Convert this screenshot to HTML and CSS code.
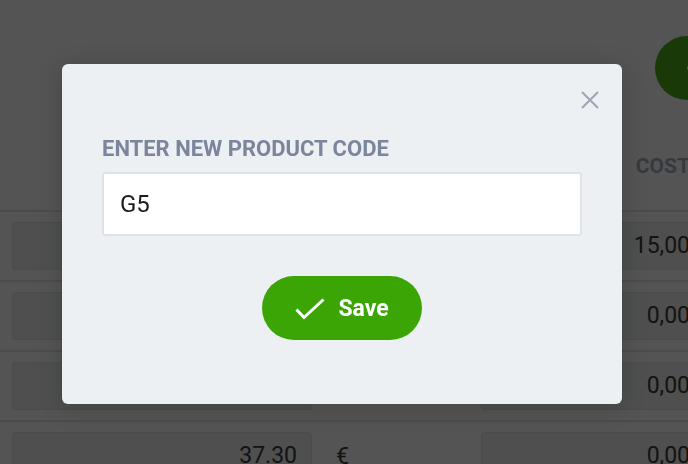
FILE: index.html
```html
<!DOCTYPE html>
<html lang="en">
<head>
<meta charset="utf-8">
<title>Products</title>
<link rel="stylesheet" href="styles.css">
</head>
<body>
<div class="page">
  <div class="topbar">
    <button class="add-btn" type="button">
      <svg class="plus" width="20" height="20" viewBox="0 0 20 20"><path d="M10 1v18M1 10h18" stroke="#fff" stroke-width="3" fill="none"/></svg>
      <span>Add product</span>
    </button>
  </div>
  <div class="table">
    <div class="thead">
      <div class="th"></div>
      <div class="th"></div>
      <div class="th th-num">COST</div>
    </div>
    <div class="tr">
      <div class="td"><div class="box num"></div></div>
      <div class="td cur">€</div>
      <div class="td"><div class="box num">15,00</div></div>
    </div>
    <div class="tr">
      <div class="td"><div class="box num"></div></div>
      <div class="td cur">€</div>
      <div class="td"><div class="box num">0,00</div></div>
    </div>
    <div class="tr">
      <div class="td"><div class="box num"></div></div>
      <div class="td cur">€</div>
      <div class="td"><div class="box num">0,00</div></div>
    </div>
    <div class="tr">
      <div class="td"><div class="box num">37.30</div></div>
      <div class="td cur">€</div>
      <div class="td"><div class="box num">0,00</div></div>
    </div>
  </div>
</div>

<div class="overlay"></div>

<div class="modal">
  <button class="close" type="button" aria-label="Close">
    <svg width="18" height="18" viewBox="0 0 18 18"><path d="M1 1L17 17M17 1L1 17" stroke="#a1a7b8" stroke-width="2.2" fill="none"/></svg>
  </button>
  <label class="label" for="code">ENTER NEW PRODUCT CODE</label>
  <input id="code" class="input" type="text" value="G5">
  <div class="actions">
    <button class="save" type="button">
      <svg width="30" height="22" viewBox="0 0 30 22"><polyline points="1.5,11.5 9,19.5 28.5,1.5" stroke="#fff" stroke-width="3" fill="none"/></svg>
      <span>Save</span>
    </button>
  </div>
</div>
</body>
</html>
```

FILE: styles.css
```css
html, body {
  margin: 0;
  padding: 0;
  overflow: hidden;
  background: #ffffff;
  font-family: Roboto, "Liberation Sans", sans-serif;
}

.page {
  width: 900px;
  height: 464px;
  overflow: hidden;
}

.topbar {
  display: flex;
  padding: 36px 0 0 655px;
}

.add-btn {
  display: flex;
  align-items: center;
  gap: 12px;
  height: 64px;
  padding: 0 32px 0 31px;
  border: none;
  border-radius: 32px;
  background: #3ba505;
  color: #fff;
  font-family: inherit;
  font-size: 22px;
  font-weight: 700;
  white-space: nowrap;
}

.thead,
.tr {
  display: grid;
  grid-template-columns: 300px 169px 224px 1fr;
  padding-left: 12px;
  border-bottom: 2px solid #e0e2e3;
}

.thead {
  padding-top: 54px;
  padding-bottom: 32px;
}

.th {
  font-size: 21px;
  line-height: 24px;
  font-weight: 700;
  color: #9ca5bd;
}

.th-num {
  text-align: right;
  padding-right: 15px;
}

.tr {
  padding-top: 10px;
  padding-bottom: 10px;
}

.td {
  display: flex;
  align-items: center;
}

.box {
  box-sizing: border-box;
  width: 100%;
  height: 48px;
  border: 1px solid #dcdfe0;
  border-radius: 3px;
  background: #e9eeec;
  font-size: 23px;
  line-height: 46px;
  color: #262626;
}

.num {
  text-align: right;
  padding-right: 14px;
}

.cur {
  padding-left: 24px;
  font-size: 23px;
  color: #262626;
}

.overlay {
  position: fixed;
  inset: 0;
  background: rgba(12, 12, 12, 0.7);
}

.modal {
  position: fixed;
  top: 64px;
  left: 62px;
  box-sizing: border-box;
  width: 560px;
  height: 340px;
  padding: 73px 40px 0;
  border-radius: 6px;
  background: #edf0f3;
  box-shadow: 0 4px 24px rgba(0, 0, 0, 0.18);
  display: flex;
  flex-direction: column;
}

.close {
  position: absolute;
  top: 27px;
  right: 23px;
  width: 18px;
  height: 18px;
  padding: 0;
  border: none;
  background: none;
  display: block;
}

.close svg {
  display: block;
}

.label {
  display: block;
  font-size: 22px;
  line-height: 24px;
  font-weight: 700;
  color: #7b859b;
  margin-bottom: 11px;
}

.input {
  box-sizing: border-box;
  width: 100%;
  height: 64px;
  margin: 0;
  padding: 0 16px;
  border: 2px solid #dde1e8;
  border-radius: 3px;
  background: #ffffff;
  font-family: inherit;
  font-size: 24px;
  color: #1c1c1c;
  outline: none;
}

.actions {
  display: flex;
  justify-content: center;
  margin-top: 40px;
}

.save {
  display: flex;
  align-items: center;
  justify-content: center;
  gap: 13px;
  width: 160px;
  height: 64px;
  padding: 0;
  border: none;
  border-radius: 32px;
  background: #3ba505;
  color: #ffffff;
  font-family: inherit;
  font-size: 23px;
  font-weight: 700;
}

.save svg {
  display: block;
  margin-top: 2px;
}
```
